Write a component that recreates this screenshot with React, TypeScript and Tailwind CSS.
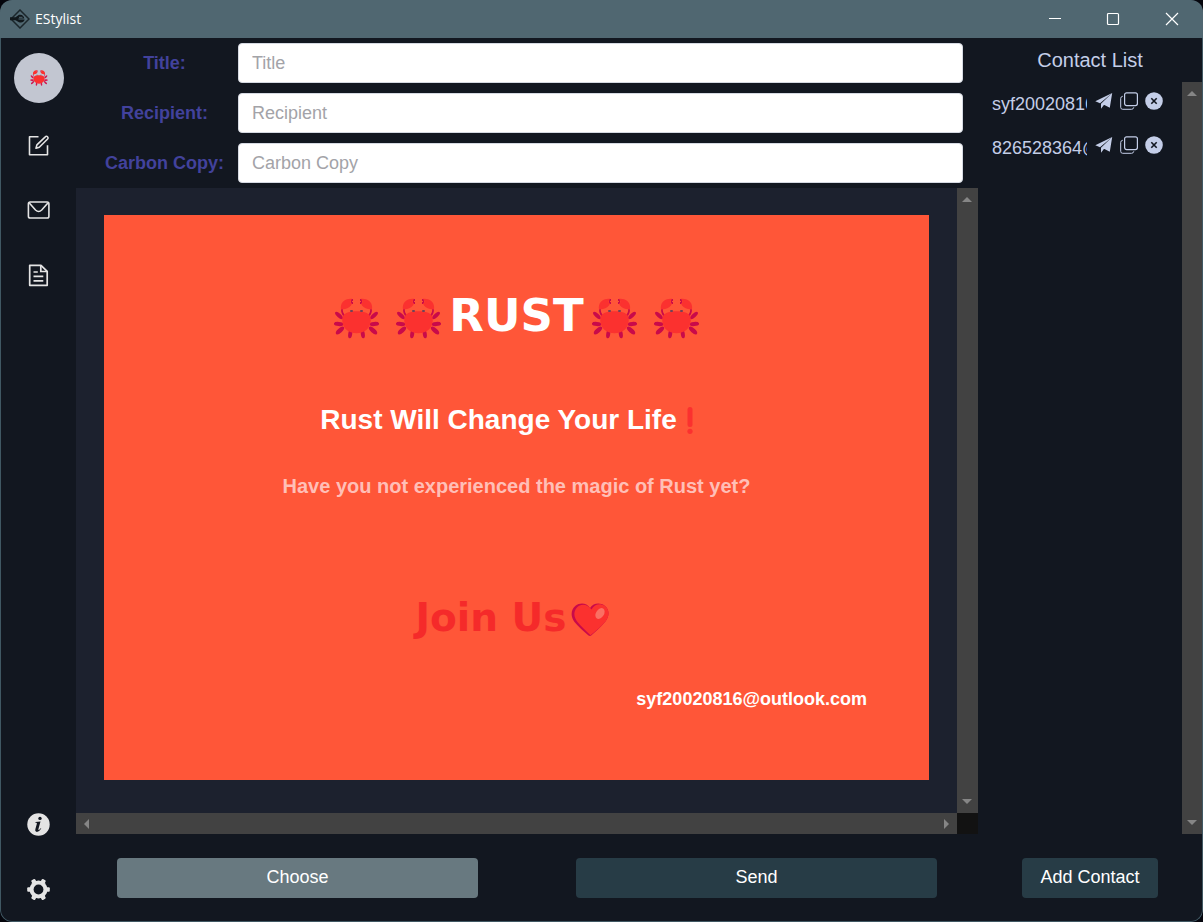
import React from "react";

function Logo() {
  return (
    <svg width="20" height="20" viewBox="0 0 20 20" fill="none" aria-hidden="true">
      <path d="M10 1 19 10l-9 9-9-9z" stroke="#1b262b" strokeWidth="1.500" />
      <path d="M0 8.200h5.500L9 5.800c3-.7 5.200 1.200 5.300 3.800H8.500v1h6.200c-.6 2.500-3.200 3.700-5.700 2.600L5.500 11.200H0z" fill="#11181c" />
      <path d="M9 8.300h3.500" stroke="#506771" strokeWidth="1" />
    </svg>
  );
}

function Crab({ className, bright = false }: { className: string; bright?: boolean }) {
  const leg = bright ? "#d0184f" : "#c90a4a";
  return (
    <svg className={className} viewBox="0 0 45 41" aria-hidden="true">
      <g fill="none" stroke={leg} strokeWidth="1.700">
        <path d="M8 10.500Q7.500 15 10.500 18M37 10.500Q37.500 15 34.500 18" />
      </g>
      <g fill={leg}>
        <ellipse cx="5" cy="17.500" rx="5" ry="2" transform="rotate(42 5 17.500)" />
        <ellipse cx="4.800" cy="26" rx="4.900" ry="2.100" transform="rotate(4 4.800 26)" />
        <ellipse cx="6" cy="32.500" rx="5.200" ry="2.200" transform="rotate(-42 6 32.500)" />
        <ellipse cx="16.200" cy="36" rx="2" ry="4.400" transform="rotate(8 16.200 36)" />
        <ellipse cx="40" cy="17.500" rx="5" ry="2" transform="rotate(-42 40 17.500)" />
        <ellipse cx="40.200" cy="26" rx="4.900" ry="2.100" transform="rotate(-4 40.200 26)" />
        <ellipse cx="39" cy="32.500" rx="5.200" ry="2.200" transform="rotate(42 39 32.500)" />
        <ellipse cx="28.800" cy="36" rx="2" ry="4.400" transform="rotate(-8 28.800 36)" />
        <path d="M17 1h2v2h-1v1h1v2h-2zM28 1h-2v2h1v1h-1v2h2z" />
      </g>
      <g fill="#fb312f">
        <path d="M18 .8C11 0 5.800 4.500 7 11.500l4-.5c3.500-.8 6-2.500 7-5.500l-1.500-1.500zM27 .8c7-.8 12.200 3.700 11 10.700l-4-.5c-3.500-.8-6-2.500-7-5.500l1.500-1.500z" />
        <path d="M22.500 13.200c8.500 0 14.300 1.800 14.300 8.800 0 8-6.300 13.300-14.300 13.300S8.200 30 8.200 22c0-7 5.800-8.800 14.300-8.800z" />
      </g>
      <g fill="#6f4258">
        <rect x="16" y="12" width="3" height="2" rx="1" />
        <rect x="26" y="12" width="3" height="2" rx="1" />
      </g>
    </svg>
  );
}

function Heart() {
  return (
    <svg width="38" height="34" viewBox="0 0 38 34" aria-hidden="true">
      <path d="M19 5C15.500-.5 9-.8 4.500 2.800-.5 7-.5 14 3.500 19c4 5 9 9 14 13.500q1.500 1 3-.2C25 28 31 23 34.800 18 38.500 13 38.500 6.500 34 3 29-.8 22.500 0 19 5z" fill="#c90a4a" />
      <path d="M20.500 6.500c-4-6-11-6-14.500-2C1.500 9.500 3.500 15.500 6.500 19c4 5 8.500 8.500 13 13.300C24.500 28 31 23 34.800 18 38.500 13 38.500 6.500 34 3c-5-3.300-10.500-2-13.500 3.500z" fill="#fb312f" />
      <ellipse cx="29" cy="10.500" rx="4" ry="6" transform="rotate(32 29 10.500)" fill="#fa7063" />
    </svg>
  );
}

function ExclamationMark() {
  return (
    <svg width="6" height="27" viewBox="0 0 6 27" aria-hidden="true" fill="#fb312f">
      <rect x=".5" width="5" height="20" rx="2.500" />
      <circle cx="3" cy="24.300" r="2.600" />
    </svg>
  );
}

function EditIcon() {
  return (
    <svg width="24" height="24" viewBox="1 0 24 24" fill="none" stroke="#e4e4e4" strokeWidth="1.600" aria-hidden="true">
      <path d="M12.500 3.700H3.500v18h18v-9.500" strokeLinejoin="round" />
      <path d="M19.300 3.800a1.500 1.500 0 0 1 2.300 2.200l-8.300 8.200-3.300 1 .9-3.300z" strokeLinejoin="round" />
    </svg>
  );
}

function MailIcon() {
  return (
    <svg width="24" height="24" viewBox="0.5 -0.5 24 24" fill="none" stroke="#e4e4e4" strokeWidth="1.600" aria-hidden="true">
      <rect x="1.900" y="3.500" width="20.500" height="16" rx="1.800" />
      <path d="M2.800 4.500l6.200 7q3.200 3 6.200 0l6.200-7" />
    </svg>
  );
}

function DocumentIcon() {
  return (
    <svg width="24" height="24" viewBox="1 -0.5 24 24" fill="none" stroke="#e4e4e4" strokeWidth="1.700" aria-hidden="true">
      <path d="M3.700 1.800H15l6.200 6v14H3.700z" strokeLinejoin="round" />
      <path d="M14.800 2v6H21M7.500 8.500h4.300M7.500 12.800h9.800M7.500 17.300h9.800" />
    </svg>
  );
}

function InfoIcon() {
  return (
    <svg width="24" height="24" viewBox="0.5 0.5 24 24" aria-hidden="true">
      <circle cx="12" cy="12" r="11.200" fill="#e4e4e4" />
      <circle cx="13.500" cy="5.900" r="1.700" fill="#121720" />
      <path d="M9 9.600l5-.6-2 7.200q-.4 1.500.4 1.200.9-.4 1.800-1.700l.6.4q-2 3.300-4.400 3.300-2.200-.1-1.500-2.800l1.400-5q.4-1.300-.5-1.300l-.9-.1z" fill="#121720" />
    </svg>
  );
}

function GearIcon() {
  return (
    <svg width="24" height="24" viewBox="0.5 0.5 24 24" aria-hidden="true">
      <g fill="#e4e4e4">
        <rect x=".7" y="9.800" width="22.600" height="4.400" rx="1" />
        <rect x=".7" y="9.800" width="22.600" height="4.400" rx="1" transform="rotate(60 12 12)" />
        <rect x=".7" y="9.800" width="22.600" height="4.400" rx="1" transform="rotate(120 12 12)" />
        <circle cx="12" cy="12" r="9" />
      </g>
      <circle cx="12" cy="12" r="4.900" fill="#121720" />
    </svg>
  );
}

function SideButton({ label, children }: { label: string; children: React.ReactNode }) {
  return (
    <button type="button" aria-label={label} className="flex size-[50px] items-center justify-center">
      {children}
    </button>
  );
}

function Field({ id, label, placeholder }: { id: string; label: string; placeholder: string }) {
  return (
    <div className="flex items-center px-[15px] py-[5px]">
      <label htmlFor={id} className="w-[147px] shrink-0 text-center text-[18px] leading-6 font-bold text-[#42429c]">
        {label}
      </label>
      <input
        id={id}
        type="text"
        placeholder={placeholder}
        className="h-10 min-w-0 flex-1 rounded border border-[#d5d9e2] bg-white px-[13px] text-[18px] text-gray-800 placeholder:text-[#a3a3a8]"
      />
    </div>
  );
}

function Arrow({ direction }: { direction: "up" | "down" | "left" | "right" }) {
  const shapes = {
    up: "M5 14h10l-5-5z",
    down: "M5 6h10l-5 5z",
    left: "M13 5v10l-5-5z",
    right: "M7 5v10l5-5z",
  };
  return (
    <button type="button" aria-label={`Scroll ${direction}`} className="flex size-5 items-center justify-center">
      <svg width="20" height="20" viewBox="0 0 20 20" fill="#868686" aria-hidden="true">
        <path d={shapes[direction]} />
      </svg>
    </button>
  );
}

function Contact({ address }: { address: string }) {
  return (
    <li className="flex h-11 items-center gap-2 pl-[14px]">
      <span className="w-[95px] overflow-hidden text-[18px] leading-6 whitespace-nowrap">{address}</span>
      <span className="flex items-center gap-[7px] pb-[6px]">
        <button type="button" aria-label={`Send to ${address}`}>
          <svg width="18" height="18" viewBox="0 0 18 18" fill="#c4cee8" aria-hidden="true">
            <path d="M17.200 1 .3 9.300l4.700 2zM17.200 1 6 11.800v5l2.700-3.600zM17.200 1 7.500 12l7.300 3.800z" />
          </svg>
        </button>
        <button type="button" aria-label={`Copy ${address}`}>
          <svg width="18" height="18" viewBox="0 0 18 18" fill="none" stroke="#c4cee8" strokeWidth="1.200" aria-hidden="true">
            <rect x="4.600" y=".8" width="12.800" height="12.800" rx="2" />
            <path d="M2.800 4.200Q.7 4.500.7 6.500v8.800q0 2 2 2h8.800q2 0 2.300-2" strokeWidth="1" />
          </svg>
        </button>
        <button type="button" aria-label={`Remove ${address}`}>
          <svg width="18" height="18" viewBox="0 0 18 18" aria-hidden="true">
            <circle cx="9" cy="9" r="8.800" fill="#c4cee8" />
            <path d="m6.300 6.300 5.400 5.400m0-5.400-5.400 5.400" stroke="#121720" strokeWidth="1.600" />
          </svg>
        </button>
      </span>
    </li>
  );
}

function TitleBar() {
  return (
    <header className="flex h-[38px] shrink-0 items-center justify-between bg-[#506771] pr-px pl-[10px] text-white">
      <div className="flex items-center gap-[5px]">
        <Logo />
        <span className="font-['Open_Sans',sans-serif] text-[14px] leading-5">EStylist</span>
      </div>
      <div className="flex h-full">
        <button type="button" aria-label="Minimize" className="flex w-[58px] items-center justify-center">
          <svg width="14" height="14" viewBox="0 0 14 14" stroke="#fff" fill="none" aria-hidden="true">
            <path d="M1 6.500h12" />
          </svg>
        </button>
        <button type="button" aria-label="Maximize" className="flex w-[58px] items-center justify-center">
          <svg width="14" height="14" viewBox="0 0 14 14" stroke="#fff" fill="none" aria-hidden="true">
            <rect x="1.500" y="1.500" width="11" height="11" rx="1" strokeWidth="1.200" />
          </svg>
        </button>
        <button type="button" aria-label="Close" className="flex w-[60px] items-center justify-center">
          <svg width="14" height="14" viewBox="0 0 14 14" stroke="#fff" fill="none" aria-hidden="true">
            <path d="m1 1 12 12M13 1 1 13" strokeWidth="1.200" />
          </svg>
        </button>
      </div>
    </header>
  );
}

function MailPreview() {
  return (
    <article className="flex h-full flex-col items-center bg-[#ff5638] pt-[70px] text-white">
      <h1 className="flex items-center gap-2 font-['DejaVu_Sans',Verdana,sans-serif] text-[45px] leading-[62px] font-bold">
        <span className="flex gap-[17px] pt-1">
          <Crab className="h-[41px] w-[45px]" />
          <Crab className="h-[41px] w-[45px]" />
        </span>
        RUST
        <span className="flex gap-[17px] pt-1">
          <Crab className="h-[41px] w-[45px]" />
          <Crab className="h-[41px] w-[45px]" />
        </span>
      </h1>
      <h2 className="mt-[55px] flex items-center gap-[10px] pr-5 text-[28px] leading-9 font-bold">
        Rust Will Change Your Life
        <ExclamationMark />
      </h2>
      <p className="mt-[33px] text-[20px] leading-[30px] font-bold text-[#ffbfb7]">
        Have you not experienced the magic of Rust yet?
      </p>
      <p className="mt-[92px] flex items-center gap-[5px] pr-2 font-['DejaVu_Sans',Verdana,sans-serif] text-[39px] leading-[50px] font-bold text-[#f52a2a]">
        Join Us
        <span className="pt-1">
          <Heart />
        </span>
      </p>
      <p className="mt-11 self-end pr-[62px] text-[18px] leading-6 font-bold">syf20020816@outlook.com</p>
    </article>
  );
}

export default function App() {
  return (
    <div className="h-screen bg-[#05060d] font-['Liberation_Sans',Arial,sans-serif]">
      <div className="flex h-full flex-col overflow-hidden rounded-xl bg-[#121720]">
        <TitleBar />
        <div className="flex min-h-0 flex-1 rounded-b-xl border border-t-0 border-[#405863]">
          <nav className="flex w-[75px] shrink-0 flex-col items-center justify-between pt-[15px] pb-[6px]">
            <div className="flex flex-col gap-[15px]">
              <button type="button" aria-label="Profile" className="mb-[2px] flex size-[50px] items-center justify-center rounded-full bg-[#c2c6d1]">
                <Crab className="h-[16px] w-[18px]" bright />
              </button>
              <SideButton label="Write"><EditIcon /></SideButton>
              <SideButton label="Mail"><MailIcon /></SideButton>
              <SideButton label="Documents"><DocumentIcon /></SideButton>
            </div>
            <div className="flex flex-col gap-[15px]">
              <SideButton label="About"><InfoIcon /></SideButton>
              <SideButton label="Settings"><GearIcon /></SideButton>
            </div>
          </nav>

          <main className="flex min-w-0 flex-1 flex-col">
            <form>
              <Field id="title" label="Title:" placeholder="Title" />
              <Field id="recipient" label="Recipient:" placeholder="Recipient" />
              <Field id="carbon-copy" label="Carbon Copy:" placeholder="Carbon Copy" />
            </form>
            <div className="grid min-h-0 flex-1 grid-cols-[minmax(0,1fr)_21px] grid-rows-[minmax(0,1fr)_21px] bg-[#1c212e]">
              <div className="overflow-hidden px-7 pt-[27px] pb-[33px]">
                <MailPreview />
              </div>
              <div className="flex flex-col justify-between bg-[#424242]">
                <Arrow direction="up" />
                <Arrow direction="down" />
              </div>
              <div className="flex items-center justify-between bg-[#424242]">
                <Arrow direction="left" />
                <Arrow direction="right" />
              </div>
              <div className="bg-[#121212]" />
            </div>
            <div className="flex h-[87px] shrink-0 items-center gap-[98px] px-[41px] text-[18px] text-white">
              <button type="button" className="h-10 flex-1 rounded bg-[#687980] pb-px">Choose</button>
              <button type="button" className="h-10 flex-1 rounded bg-[#273c46] pb-px">Send</button>
            </div>
          </main>

          <aside className="flex w-56 shrink-0 flex-col text-[#c4cee8]">
            <h2 className="h-11 text-center text-[20px] leading-[44px]">Contact List</h2>
            <div className="flex min-h-0 flex-1">
              <ul className="min-w-0 flex-1 overflow-hidden">
                <Contact address="syf20020816@outlook.com" />
                <Contact address="826528364@qq.com" />
              </ul>
              <div className="flex w-5 flex-col justify-between bg-[#424242]">
                <Arrow direction="up" />
                <Arrow direction="down" />
              </div>
            </div>
            <div className="flex h-[87px] shrink-0 items-center justify-center">
              <button type="button" className="h-10 w-[136px] rounded bg-[#273c46] pb-px text-[18px] text-white">
                Add Contact
              </button>
            </div>
          </aside>
        </div>
      </div>
    </div>
  );
}
